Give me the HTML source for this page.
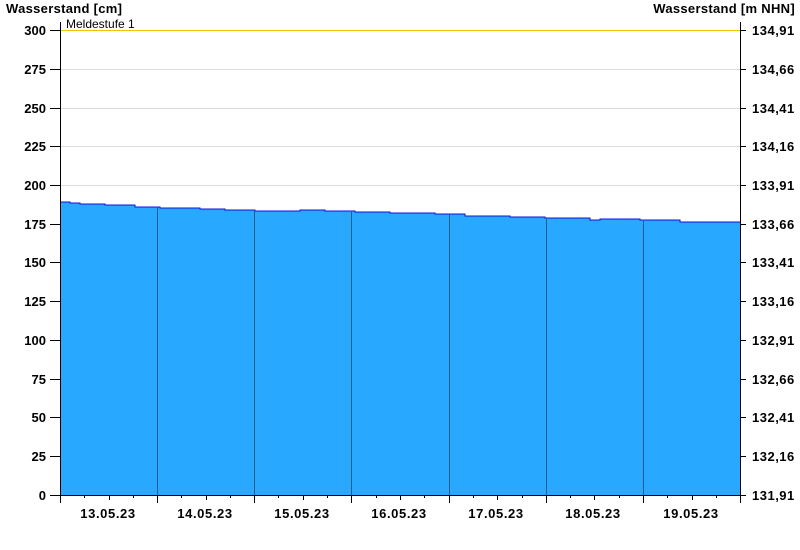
<!DOCTYPE html>
<html><head><meta charset="utf-8"><style>
html,body{margin:0;padding:0;background:#fff;width:800px;height:550px;overflow:hidden}
svg text{font-family:"Liberation Sans",Arial,sans-serif}
</style></head><body>
<svg width="800" height="550" xmlns="http://www.w3.org/2000/svg">
<g stroke="#dcdcdc" stroke-width="1">
<line x1="60" y1="69.5" x2="740" y2="69.5"/><line x1="60" y1="108.5" x2="740" y2="108.5"/>
<line x1="60" y1="146.5" x2="740" y2="146.5"/><line x1="60" y1="185.5" x2="740" y2="185.5"/>
</g>
<line x1="60" y1="30.5" x2="740" y2="30.5" stroke="#f5c400" stroke-width="1"/>
<polygon fill="#29a8ff" points="60,202 70,202 70,203 80,203 80,204 105,204 105,205 135,205 135,207 160,207 160,208 200,208 200,209 225,209 225,210 255,210 255,211 300,211 300,210 325,210 325,211 355,211 355,212 390,212 390,213 435,213 435,214 465,214 465,216 510,216 510,217 545,217 545,218 590,218 590,220 600,220 600,219 640,219 640,220 680,220 680,222 740,222 740,495 60,495"/>
<polyline fill="none" stroke="#1010e0" stroke-width="1" points="60,202 70,202 70,203 80,203 80,204 105,204 105,205 135,205 135,207 160,207 160,208 200,208 200,209 225,209 225,210 255,210 255,211 300,211 300,210 325,210 325,211 355,211 355,212 390,212 390,213 435,213 435,214 465,214 465,216 510,216 510,217 545,217 545,218 590,218 590,220 600,220 600,219 640,219 640,220 680,220 680,222 740,222"/>
<g stroke="#1f5f8f" stroke-width="1">
<line x1="157.5" y1="207" x2="157.5" y2="495"/><line x1="254.5" y1="210" x2="254.5" y2="495"/>
<line x1="351.5" y1="212" x2="351.5" y2="495"/><line x1="449.5" y1="214" x2="449.5" y2="495"/>
<line x1="546.5" y1="218" x2="546.5" y2="495"/><line x1="643.5" y1="220" x2="643.5" y2="495"/>
</g>
<g stroke="#000" stroke-width="1">
<line x1="60.5" y1="22" x2="60.5" y2="495"/><line x1="740.5" y1="22" x2="740.5" y2="495"/>
<line x1="50" y1="495.5" x2="746" y2="495.5"/>
<line x1="50" y1="30.5" x2="60" y2="30.5"/><line x1="50" y1="69.5" x2="60" y2="69.5"/><line x1="50" y1="108.5" x2="60" y2="108.5"/><line x1="50" y1="146.5" x2="60" y2="146.5"/><line x1="50" y1="185.5" x2="60" y2="185.5"/><line x1="50" y1="224.5" x2="60" y2="224.5"/><line x1="50" y1="262.5" x2="60" y2="262.5"/><line x1="50" y1="301.5" x2="60" y2="301.5"/><line x1="50" y1="340.5" x2="60" y2="340.5"/><line x1="50" y1="379.5" x2="60" y2="379.5"/><line x1="50" y1="417.5" x2="60" y2="417.5"/><line x1="50" y1="456.5" x2="60" y2="456.5"/>
<line x1="740" y1="30.5" x2="746" y2="30.5"/><line x1="740" y1="69.5" x2="746" y2="69.5"/><line x1="740" y1="108.5" x2="746" y2="108.5"/><line x1="740" y1="146.5" x2="746" y2="146.5"/><line x1="740" y1="185.5" x2="746" y2="185.5"/><line x1="740" y1="224.5" x2="746" y2="224.5"/><line x1="740" y1="262.5" x2="746" y2="262.5"/><line x1="740" y1="301.5" x2="746" y2="301.5"/><line x1="740" y1="340.5" x2="746" y2="340.5"/><line x1="740" y1="379.5" x2="746" y2="379.5"/><line x1="740" y1="417.5" x2="746" y2="417.5"/><line x1="740" y1="456.5" x2="746" y2="456.5"/>
<line x1="60.5" y1="495" x2="60.5" y2="503"/><line x1="157.5" y1="495" x2="157.5" y2="503"/><line x1="254.5" y1="495" x2="254.5" y2="503"/><line x1="351.5" y1="495" x2="351.5" y2="503"/><line x1="449.5" y1="495" x2="449.5" y2="503"/><line x1="546.5" y1="495" x2="546.5" y2="503"/><line x1="643.5" y1="495" x2="643.5" y2="503"/><line x1="740.5" y1="495" x2="740.5" y2="503"/>
</g>
<g stroke="#000" stroke-width="1">
<line x1="84.5" y1="495" x2="84.5" y2="498"/><line x1="109.5" y1="495" x2="109.5" y2="500"/><line x1="133.5" y1="495" x2="133.5" y2="498"/>
<line x1="181.5" y1="495" x2="181.5" y2="498"/><line x1="206.5" y1="495" x2="206.5" y2="500"/><line x1="230.5" y1="495" x2="230.5" y2="498"/>
<line x1="278.5" y1="495" x2="278.5" y2="498"/><line x1="303.5" y1="495" x2="303.5" y2="500"/><line x1="327.5" y1="495" x2="327.5" y2="498"/>
<line x1="376.5" y1="495" x2="376.5" y2="498"/><line x1="400.5" y1="495" x2="400.5" y2="500"/><line x1="424.5" y1="495" x2="424.5" y2="498"/>
<line x1="473.5" y1="495" x2="473.5" y2="498"/><line x1="497.5" y1="495" x2="497.5" y2="500"/><line x1="522.5" y1="495" x2="522.5" y2="498"/>
<line x1="570.5" y1="495" x2="570.5" y2="498"/><line x1="594.5" y1="495" x2="594.5" y2="500"/><line x1="619.5" y1="495" x2="619.5" y2="498"/>
<line x1="667.5" y1="495" x2="667.5" y2="498"/><line x1="692.5" y1="495" x2="692.5" y2="500"/><line x1="716.5" y1="495" x2="716.5" y2="498"/>
</g>
<g font-size="13" font-weight="bold" fill="#000">
<text x="6" y="13" letter-spacing="0.3">Wasserstand [cm]</text>
<text x="795" y="13" text-anchor="end" letter-spacing="0.3">Wasserstand [m NHN]</text>
<g text-anchor="end">
<text x="46" y="35">300</text><text x="46" y="74">275</text><text x="46" y="113">250</text><text x="46" y="151">225</text><text x="46" y="190">200</text><text x="46" y="229">175</text><text x="46" y="267">150</text><text x="46" y="306">125</text><text x="46" y="345">100</text><text x="46" y="384">75</text><text x="46" y="422">50</text><text x="46" y="461">25</text><text x="46" y="500">0</text>
</g>
<g letter-spacing="0.5">
<text x="752" y="35">134,91</text><text x="752" y="74">134,66</text><text x="752" y="113">134,41</text><text x="752" y="151">134,16</text><text x="752" y="190">133,91</text><text x="752" y="229">133,66</text><text x="752" y="267">133,41</text><text x="752" y="306">133,16</text><text x="752" y="345">132,91</text><text x="752" y="384">132,66</text><text x="752" y="422">132,41</text><text x="752" y="461">132,16</text><text x="752" y="500">131,91</text>
</g>
<g text-anchor="middle" letter-spacing="0.6">
<text x="108" y="518">13.05.23</text><text x="205" y="518">14.05.23</text><text x="302" y="518">15.05.23</text><text x="399" y="518">16.05.23</text><text x="496" y="518">17.05.23</text><text x="593" y="518">18.05.23</text><text x="691" y="518">19.05.23</text>
</g>
</g>
<text x="66" y="28" font-size="12" fill="#000">Meldestufe 1</text>
</svg>
</body></html>
